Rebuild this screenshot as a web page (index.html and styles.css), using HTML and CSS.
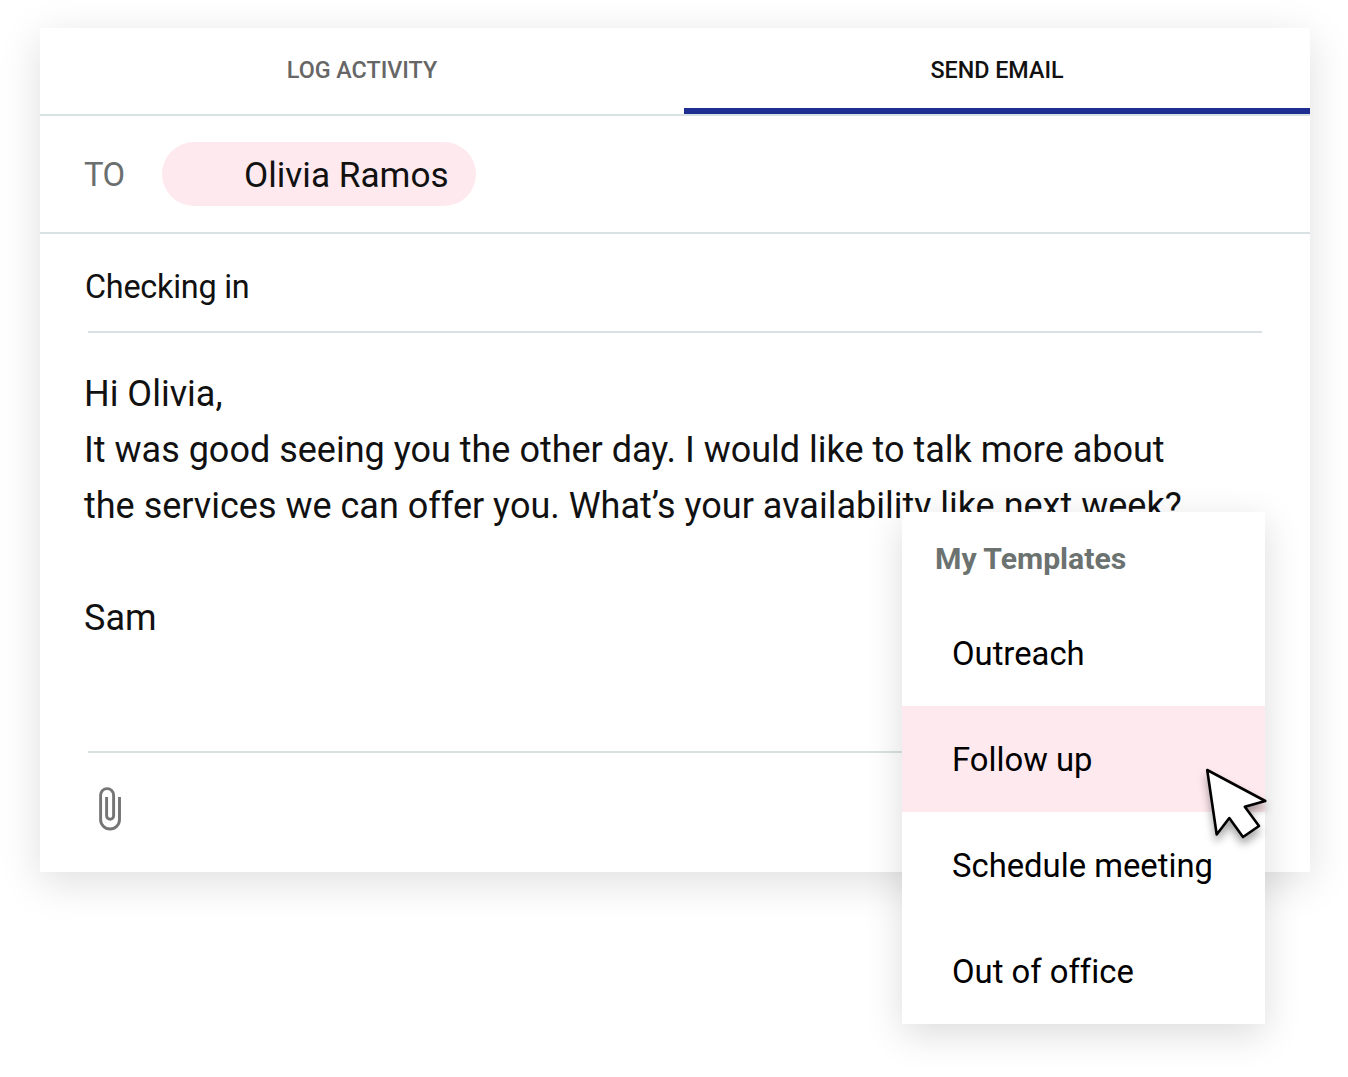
FILE: index.html
```html
<!DOCTYPE html>
<html lang="en">
<head>
<meta charset="utf-8">
<title>Send email</title>
<link rel="stylesheet" href="styles.css">
</head>
<body>
<main class="composer">
  <nav class="tabs">
    <a class="tab">LOG ACTIVITY</a>
    <a class="tab tab-active">SEND EMAIL</a>
  </nav>
  <section class="recipient">
    <span class="to">TO</span>
    <span class="chip">Olivia Ramos</span>
  </section>
  <section class="message">
    <h1 class="subject">Checking in</h1>
    <div class="body">
      <p>Hi Olivia,</p>
      <p>It was good seeing you the other day. I would like to talk more about</p>
      <p>the services we can offer you. What’s your availability like next week?</p>
      <p class="signature">Sam</p>
    </div>
    <footer class="tools">
      <svg class="clip" viewBox="0 0 24 44" fill="none" stroke="#757575" stroke-width="2.9"><path d="M21.5 10V32.5a9.45 9.45 0 0 1-18.9 0V8.1a6.5 6.5 0 0 1 13 0V28.7a3.5 3.5 0 0 1-7 0V10"/></svg>
    </footer>
  </section>
</main>
<aside class="menu">
  <h2 class="menu-title">My Templates</h2>
  <ul class="menu-list">
    <li class="item">Outreach</li>
    <li class="item item-active">Follow up</li>
    <li class="item">Schedule meeting</li>
    <li class="item">Out of office</li>
  </ul>
</aside>
<svg class="cursor" viewBox="0 0 70 80"><path d="M7.2 10L16.7 74.5L29.3 58L43 77L59 66L44.8 46.8L65.3 41Z" fill="#fff" stroke="#000" stroke-width="2.6" stroke-linejoin="round"/></svg>
</body>
</html>
```

FILE: styles.css
```css
* { box-sizing: border-box; }
body { margin: 0; padding: 28px 38px 0 40px; height: 1077px; background: #fff; color: #111; font-family: Roboto, sans-serif; font-variant-ligatures: none; overflow: hidden; }
p, h1, h2, ul { margin: 0; padding: 0; font-weight: 400; }
.composer { width: 1270px; height: 844px; background: #fff; box-shadow: 0 10px 40px rgba(0,0,0,.13); }
.tabs { display: flex; height: 88px; border-bottom: 2px solid #d9e2e2; }
.tab { width: 644px; padding-top: 28px; text-align: center; font-size: 23.3px; line-height: 28px; font-weight: 500; color: #666; }
.tab-active { width: 626px; height: 86px; border-bottom: 6px solid #1e2f91; color: #111; }
.recipient { display: flex; align-items: center; height: 118px; padding-left: 44px; border-bottom: 2px solid #d9e2e2; }
.to { width: 78px; padding-top: 2px; font-size: 32.8px; letter-spacing: -.5px; color: #6b706f; }
.chip { width: 314px; height: 64px; padding-left: 82px; border-radius: 32px; background: #fee9ee; font-size: 35.2px; line-height: 66px; white-space: nowrap; }
.message { padding: 0 48px 0 44px; }
.subject { height: 97px; padding: 33px 0 0 1px; font-size: 32.4px; line-height: 40px; letter-spacing: -.25px; }
.body { height: 422px; margin-left: 4px; padding-top: 33px; border-top: 2px solid #d9e2e2; border-bottom: 2px solid #d9e2e2; font-size: 36px; line-height: 56px; white-space: nowrap; }
.body p { margin-left: -4px; }
.body .signature { margin-top: 56px; }
.tools { padding: 34px 0 0 14px; }
.clip { display: block; width: 24px; height: 44px; }
.menu { position: absolute; left: 902px; top: 512px; width: 363px; height: 512px; background: #fff; color: #000; box-shadow: 0 10px 36px rgba(0,0,0,.14); }
.menu-title { height: 88px; padding: 28px 0 0 33px; color: #6b7270; font-size: 30.2px; line-height: 38px; font-weight: 700; }
.menu-list { list-style: none; }
.item { height: 106px; padding-left: 50px; font-size: 32.8px; line-height: 109px; }
.item-active { background: #fee9ee; }
.cursor { position: absolute; left: 1200px; top: 760px; width: 70px; height: 80px; overflow: visible; filter: drop-shadow(0 6px 4px rgba(0,0,0,.35)); }
```
